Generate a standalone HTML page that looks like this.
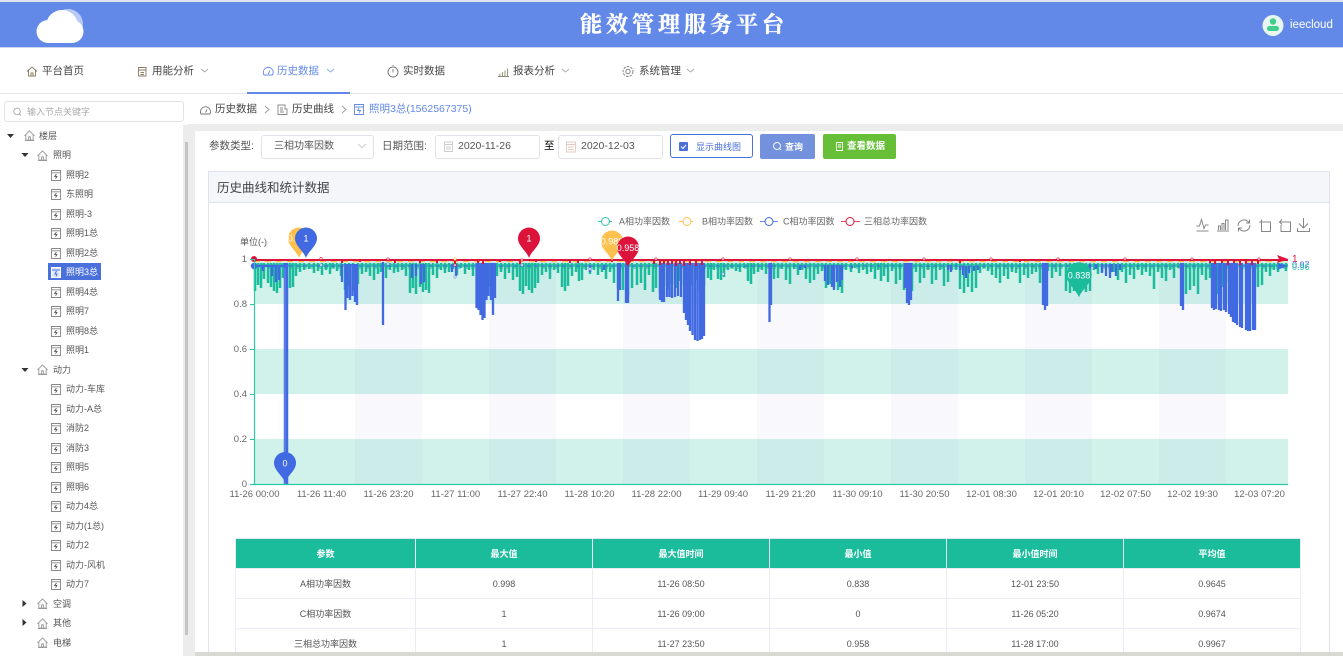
<!DOCTYPE html>
<html lang="zh"><head><meta charset="utf-8"><title>能效管理服务平台</title>
<style>
html,body{margin:0;padding:0;background:#fff}
#p{position:relative;width:1343px;height:656px;overflow:hidden;background:#fff;font-family:"Liberation Sans","Noto Sans CJK SC",sans-serif;color:#555}
#p div,#p span.t{position:absolute;white-space:nowrap}
.t{line-height:16px;height:16px}
.n{font-size:10.5px;color:#444;top:63px}
.b{font-size:10.5px;color:#444;top:101px}
.tr{font-size:9px;color:#555}
.box{border:1px solid #dfe2ea;border-radius:3px;background:#fff;box-sizing:border-box}
table{position:absolute;left:235px;top:538px;width:1065px;border-collapse:collapse;table-layout:fixed;font-size:9px;color:#555;text-align:center;border:1px solid #e3e6f1}
th{background:#1abc9c;color:#fff;height:29px;padding:0;font-weight:bold;border:1px solid #e9ecf5;border-top:0;border-bottom:0}
td{height:29px;padding:0;border:1px solid #e9ecf5}
svg{position:absolute;left:0;top:0}
svg text{font-family:"Liberation Sans","Noto Sans CJK SC",sans-serif}
</style></head><body><div id="p">

<div style="left:0;top:0;width:1343px;height:2px;background:#dfe3ee"></div>
<div style="left:0;top:2px;width:1343px;height:45px;background:#6389e8"></div>
<div style="left:0;top:47px;width:1343px;height:1px;background:#ccd6f0"></div>
<div style="left:580px;top:8px;font:bold 22px/32px 'Noto Serif CJK SC','Liberation Serif',serif;letter-spacing:4px;color:#fff;-webkit-text-stroke:.35px #fff">能效管理服务平台</div>
<div style="left:1290px;top:17px;font-size:11.5px;line-height:16px;color:#fff">ieecloud</div>

<div style="left:0;top:93px;width:1343px;height:1px;background:#e6e6e6"></div>
<div class="n t" style="left:42px">平台首页</div>
<div class="n t" style="left:152px">用能分析</div>
<div class="n t" style="left:277px;color:#6389e8">历史数据</div>
<div class="n t" style="left:403px">实时数据</div>
<div class="n t" style="left:513px">报表分析</div>
<div class="n t" style="left:639px">系统管理</div>
<div style="left:247px;top:92px;width:103px;height:2px;background:#6389e8"></div>

<div class="b t" style="left:215px">历史数据</div>
<div class="b t" style="left:292px">历史曲线</div>
<div class="b t" style="left:369px;color:#6389e8">照明3总(1562567375)</div>

<div style="left:183px;top:124px;width:1160px;height:532px;background:#ececec"></div>
<div style="left:183px;top:94px;width:5px;height:31px;background:#fff"></div>
<div class="box" style="left:4px;top:101px;width:180px;height:21px"></div>
<div class="t" style="left:27px;top:104px;font-size:9px;color:#aaa">输入节点关键字</div>
<div style="left:185px;top:142px;width:3px;height:493px;background:#c4c4c4"></div>
<div style="left:195px;top:131px;width:1148px;height:521px;background:#fff"></div>

<div class="tr t" style="left:39px;top:128px">楼层</div>
<div class="tr t" style="left:53px;top:147px">照明</div>
<div class="tr t" style="left:66px;top:167px">照明2</div>
<div class="tr t" style="left:66px;top:186px">东照明</div>
<div class="tr t" style="left:66px;top:206px">照明-3</div>
<div class="tr t" style="left:66px;top:225px">照明1总</div>
<div class="tr t" style="left:66px;top:245px">照明2总</div>
<div style="left:48px;top:263px;width:53px;height:17px;background:#4a70dc"></div>
<div class="tr t" style="left:66px;top:264px;color:#fff">照明3总</div>
<div class="tr t" style="left:66px;top:284px">照明4总</div>
<div class="tr t" style="left:66px;top:303px">照明7</div>
<div class="tr t" style="left:66px;top:323px">照明8总</div>
<div class="tr t" style="left:66px;top:342px">照明1</div>
<div class="tr t" style="left:53px;top:362px">动力</div>
<div class="tr t" style="left:66px;top:381px">动力-车库</div>
<div class="tr t" style="left:66px;top:401px">动力-A总</div>
<div class="tr t" style="left:66px;top:420px">消防2</div>
<div class="tr t" style="left:66px;top:440px">消防3</div>
<div class="tr t" style="left:66px;top:459px">照明5</div>
<div class="tr t" style="left:66px;top:479px">照明6</div>
<div class="tr t" style="left:66px;top:498px">动力4总</div>
<div class="tr t" style="left:66px;top:518px">动力(1总)</div>
<div class="tr t" style="left:66px;top:537px">动力2</div>
<div class="tr t" style="left:66px;top:557px">动力-风机</div>
<div class="tr t" style="left:66px;top:576px">动力7</div>
<div class="tr t" style="left:53px;top:596px">空调</div>
<div class="tr t" style="left:53px;top:615px">其他</div>
<div class="tr t" style="left:53px;top:635px">电梯</div>

<div class="t" style="left:209px;top:138px;font-size:10.5px;color:#555">参数类型:</div>
<div class="box" style="left:261px;top:135px;width:113px;height:24px"></div>
<div class="t" style="left:274px;top:139px;font-size:10px;color:#555">三相功率因数</div>
<div class="t" style="left:382px;top:138px;font-size:10.5px;color:#555">日期范围:</div>
<div class="box" style="left:435px;top:135px;width:105px;height:24px"></div>
<div class="t" style="left:458px;top:138px;font-size:10.5px;color:#555">2020-11-26</div>
<div class="t" style="left:544px;top:138px;font-size:10.5px;color:#000">至</div>
<div class="box" style="left:558px;top:135px;width:105px;height:24px"></div>
<div class="t" style="left:581px;top:138px;font-size:10.5px;color:#555">2020-12-03</div>
<div class="box" style="left:670px;top:134px;width:83px;height:24px;border-color:#4a70dc"></div>
<div class="t" style="left:696px;top:139px;font-size:9px;color:#4a70dc">显示曲线图</div>
<div style="left:760px;top:134px;width:55px;height:25px;background:#7391dd;border-radius:2px"></div>
<div class="t" style="left:785px;top:139px;font-size:9px;color:#fff;font-weight:bold">查询</div>
<div style="left:823px;top:134px;width:73px;height:25px;background:#66bf36;border-radius:2px"></div>
<div class="t" style="left:847px;top:139px;font-size:9.5px;color:#fff;font-weight:bold">查看数据</div>

<div style="left:208px;top:171px;width:1122px;height:490px;border:1px solid #e0e3ee;box-sizing:border-box;background:#fff"></div>
<div style="left:209px;top:172px;width:1120px;height:31px;background:#f5f6fa;border-bottom:1px solid #e0e3ee;box-sizing:border-box"></div>
<div class="t" style="left:217px;top:180px;font-size:12.5px;color:#444">历史曲线和统计数据</div>

<svg width="1343" height="656" viewBox="0 0 1343 656">
<defs>
<symbol id="h" viewBox="0 0 12 12" overflow="visible"><path d="M.5 6.5 6 1l5.500 5.500M2 5.500V11h8V5.500M5 11V7.500h2V11M1 11.500h10" fill="none" stroke="#999" stroke-width="1"/></symbol>
<symbol id="m" viewBox="0 0 11 12" overflow="visible"><path d="M.5.500h10v11H.500zM.5 3h10" fill="none" stroke="#888" stroke-width="1"/><path d="M6 4.500 4 7h2.500L5 9.500" fill="none" stroke="#555" stroke-width="1"/></symbol>
<path id="pin" d="M0 19.500C-2 13-11 7.500-11 0A11 11 0 1 1 11 0C11 7.500 2 13 0 19.500Z"/>
</defs>

<g fill="#fff">
<circle cx="68" cy="24" r="15" opacity=".55"/><circle cx="62" cy="26" r="16"/><circle cx="48" cy="31.500" r="11.500"/><circle cx="72" cy="31.500" r="11.500"/><rect x="48" y="30" width="24" height="13"/>
</g>
<circle cx="1273" cy="25.500" r="10.500" fill="#e8f6ef"/><circle cx="1273" cy="21.500" r="3.200" fill="#3ecf8e"/><rect x="1267" y="26" width="12" height="5" rx="2.500" fill="#3ecf8e"/>

<g fill="none" stroke="#777" stroke-width=".9">
<path d="M27 71.500 32 67l5 4.500M28.500 70.500V76h7v-5.500M31 76v-3h2v3" stroke="#8a7a60"/>
<path d="M138.500 67.500h7.500v8.500h-7.500zM138 70h8.500M140.500 72.500h3.500M140.500 74.500h3.500" stroke="#8a7a60"/>
<path d="M264 75a5 5 0 1 1 8.500 0zM268.200 74l1.800-3.500" stroke="#6389e8"/>
<circle cx="393" cy="72" r="5"/><path d="M393 66v-1M393 69v3.500"/>
<path d="M498 76.500h11M500 76v-2.500M502.500 76v-4M505 76v-5.500M507.500 76v-7.500" stroke="#8a8a70"/>
<circle cx="628" cy="71.500" r="2.200"/><circle cx="628" cy="71.500" r="5" stroke-dasharray="2.500 1.200"/>
<path d="m201 69 3.500 3 3.500-3M562 69l3.500 3 3.500-3M687 69l3.500 3 3.500-3" stroke="#aaa"/>
<path d="m327 69 3.500 3 3.500-3" stroke="#8ea8ee"/>
<circle cx="17" cy="111.500" r="3.300" stroke="#aaa"/><path d="m19.500 114 1.500 1.500" stroke="#aaa"/>
<path d="M201 114a5 5 0 1 1 9 0zM205.500 112.500l1.500-3"/>
<path d="M278 105h7v4h2v5.500h-9z" stroke="#888"/><path d="M280 108h3M280 110h3M280 112h4" stroke="#888"/>
<path d="m265 106 4 3.500-4 3.500M342 106l4 3.500-4 3.500" stroke="#999"/>
<path d="M354.500 104.500h9v10h-9zM354.500 107h9M359 108l-1.500 2.500h3L359 113" stroke="#6389e8"/>
<path d="m358 144 4 3.500 4-3.500" stroke="#c8c8c8"/>
<path d="M444.500 142h8v9.500h-8zM444.500 144.500h8M446 147h5M446 149h5" stroke="#ccc"/>
<path d="M566.500 142h9v10h-9zM566.500 144.500h9M568 147h6M568 149.500h6" stroke="#e3c9c0"/>
<path d="M836.500 142.500h6v8h-6zM838 145h3M838 147h3" stroke="#fff"/>
<circle cx="777" cy="146" r="3.500" stroke="#fff"/><path d="m779.500 148.500 1.500 1.500" stroke="#fff"/>
</g>
<rect x="679" y="142" width="9" height="9" rx="1" fill="#4a70dc"/><path d="m681 146.500 2 2 3-3.500" fill="none" stroke="#fff" stroke-width="1"/>

<g id="tree">
<path d="M7 134h7l-3.500 4zM21.500 153h7l-3.500 4zM21.500 368h7l-3.500 4z" fill="#333"/><path d="M22.500 600v7l4-3.500zM22.500 619v7l4-3.500z" fill="#333"/>
<use href="#h" x="24" y="130" width="11" height="11"/><use href="#h" x="37" y="150" width="11" height="11"/><use href="#h" x="37" y="364" width="11" height="11"/><use href="#h" x="37" y="598" width="11" height="11"/><use href="#h" x="37" y="618" width="11" height="11"/><use href="#h" x="37" y="637" width="11" height="11"/>
<use href="#m" x="51" y="170" width="10" height="11"/><use href="#m" x="51" y="189" width="10" height="11"/><use href="#m" x="51" y="209" width="10" height="11"/><use href="#m" x="51" y="228" width="10" height="11"/><use href="#m" x="51" y="248" width="10" height="11"/>
<rect x="51.500" y="267.500" width="9" height="10" fill="#dfe7fb" stroke="#fff"/><path d="M52 270h8M56.500 271 55 274h2l-1 2.500" fill="none" stroke="#4a70dc"/>
<use href="#m" x="51" y="287" width="10" height="11"/><use href="#m" x="51" y="306" width="10" height="11"/><use href="#m" x="51" y="326" width="10" height="11"/><use href="#m" x="51" y="345" width="10" height="11"/>
<use href="#m" x="51" y="384" width="10" height="11"/><use href="#m" x="51" y="404" width="10" height="11"/><use href="#m" x="51" y="423" width="10" height="11"/><use href="#m" x="51" y="443" width="10" height="11"/><use href="#m" x="51" y="462" width="10" height="11"/><use href="#m" x="51" y="482" width="10" height="11"/><use href="#m" x="51" y="501" width="10" height="11"/><use href="#m" x="51" y="521" width="10" height="11"/><use href="#m" x="51" y="540" width="10" height="11"/><use href="#m" x="51" y="560" width="10" height="11"/><use href="#m" x="51" y="579" width="10" height="11"/>
</g>

<g fill="#f8f8fd">
<rect x="355" y="259" width="67" height="225"/><rect x="489" y="259" width="67" height="225"/><rect x="623" y="259" width="67" height="225"/><rect x="757" y="259" width="67" height="225"/><rect x="891" y="259" width="67" height="225"/><rect x="1025" y="259" width="67" height="225"/><rect x="1159" y="259" width="67" height="225"/>
</g>
<g fill="#1abc9c" fill-opacity=".2">
<rect x="254" y="259" width="1034" height="45"/><rect x="254" y="349" width="1034" height="45"/><rect x="254" y="439" width="1034" height="45"/>
</g>

<path fill="none" stroke="#1abc9c" stroke-width="2.500" d="M255 263V291M258 263V285M261 263V288M264 263V279M268 263V283M271 263V287M274 263V291M277 263V293M280 263V288M283 263V278M290 263V288M293 263V287M296 263V276M300 263V272M304 263V270M309 263V269M314 263V273M318 263V271M322 263V275M326 263V270M330 263V274M333 263V268M337 263V271M341 263V276M345 263V290M349 263V286M353 263V291M358 263V284M362 263V274M366 263V272M370 263V276M374 263V280M378 263V274M381 263V272M386 263V278M390 263V270M394 263V273M398 263V272M402 263V270M406 263V276M410 263V293M413 263V288M416 263V294M420 263V287M423 263V292M426 263V290M429 263V293M433 263V275M437 263V278M441 263V270M445 263V273M449 263V272M453 263V269M457 263V275M461 263V268M465 263V274M469 263V270M473 263V276M477 263V293M481 263V288M485 263V291M489 263V287M493 263V290M497 263V276M501 263V272M505 263V279M509 263V273M513 263V280M517 263V277M520 263V291M523 263V294M526 263V286M529 263V290M532 263V293M535 263V288M538 263V283M542 263V275M546 263V272M550 263V279M554 263V270M558 263V273M562 263V287M565 263V291M568 263V286M572 263V276M576 263V272M579 263V281M582 263V280M586 263V270M590 263V274M594 263V270M598 263V275M602 263V272M606 263V279M610 263V272M614 263V283M618 263V288M623 263V290M628 263V295M632 263V288M637 263V285M641 263V283M645 263V290M649 263V275M653 263V292M656 263V288M660 263V293M664 263V286M668 263V289M672 263V284M676 263V288M680 263V281M684 263V285M688 263V280M692 263V285M696 263V280M700 263V290M704 263V286M708 263V278M711 263V280M714 263V270M718 263V279M721 263V280M724 263V277M728 263V270M732 263V268M736 263V271M740 263V272M744 263V268M748 263V281M751 263V284M754 263V274M758 263V272M762 263V270M766 263V274M770 263V283M774 263V279M778 263V278M782 263V269M786 263V280M790 263V284M794 263V269M798 263V275M802 263V270M806 263V279M810 263V283M814 263V280M818 263V274M822 263V271M826 263V288M830 263V284M834 263V287M838 263V290M842 263V293M846 263V270M851 263V272M855 263V268M859 263V273M863 263V270M867 263V274M871 263V272M875 263V279M878 263V270M881 263V281M884 263V276M888 263V282M892 263V271M896 263V284M900 263V280M904 263V290M908 263V282M912 263V291M916 263V272M920 263V283M924 263V278M928 263V270M932 263V284M936 263V280M940 263V270M944 263V286M948 263V282M952 263V270M956 263V270M960 263V289M964 263V293M968 263V287M972 263V292M976 263V288M980 263V273M984 263V268M988 263V271M992 263V275M996 263V278M1000 263V283M1004 263V276M1008 263V279M1012 263V272M1016 263V273M1020 263V283M1024 263V275M1028 263V278M1032 263V274M1036 263V272M1040 263V283M1044 263V278M1048 263V271M1052 263V278M1056 263V272M1060 263V276M1066 263V291M1070 263V293M1074 263V291M1078 263V290M1082 263V289M1086 263V292M1090 263V291M1094 263V270M1098 263V274M1102 263V272M1106 263V268M1110 263V273M1114 263V272M1118 263V280M1122 263V272M1126 263V283M1130 263V275M1134 263V279M1138 263V270M1142 263V275M1146 263V272M1150 263V276M1154 263V289M1158 263V272M1162 263V278M1166 263V281M1170 263V270M1174 263V278M1178 263V268M1186 263V294M1190 263V290M1194 263V286M1198 263V294M1202 263V275M1206 263V280M1210 263V278M1214 263V290M1218 263V294M1222 263V287M1226 263V282M1258 263V287M1262 263V285M1266 263V272M1270 263V276M1274 263V270M1278 263V272M1282 263V268M1286 263V271"/>
<path d="M254 265.500H1288" fill="none" stroke="#1abc9c" stroke-width="3" opacity=".75"/>
<path d="M254 268H1288" fill="none" stroke="#1abc9c" stroke-width="1" stroke-dasharray="4 3"/>

<path fill="none" stroke="#4169e1" stroke-width="2.300" d="M254 266H284M263 265V271M272 265V276M276 265V282M279 265V280M342 264V282M345.500 264V310M347.500 264V298M350 264V300M352.500 264V296M355 264V302M357 264V305M383 262V325M412 264V278M416 264V276M421 264V284M424 264V282M452 264V272M456 264V276M476.500 263V308M478.500 263V310M480.500 263V315M482.500 263V320M484.500 263V318M486.500 263V300M488.500 263V296M491 263V300M493 263V315M495 263V298M590 265V272M604 265V270M618 263V301M620 263V290M626 263V303M628 263V303M660 263V300M662 263V302M664 263V302M667 263V297M669.500 263V297M672 263V298M675 263V297M678 263V296M681 263V297M684 263V313M686 263V320M688 263V325M690 263V331M692.500 263V335M695 263V340M697.500 263V341M700 263V340M702 263V339M704 263V336M769.500 263V322M771 263V305M800 265V270M805 265V268M825 265V281M828 265V285M832 265V287M834 265V290M837 265V282M840 265V287M842 265V280M852 266V268M905 263V288M907 263V303M909 263V305M911 263V300M948 265V270M951 265V272M960 266V270M963 266V275M966 266V278M969 266V273M974 266V271M978 266V270M1043 263V305M1045 263V310M1047 263V306M1084 264V268M1090 264V270M1096 264V269M1102 264V273M1106 264V276M1110 264V278M1112 264V272M1116 264V276M1120 264V270M1181 263V306M1183 263V310M1212 263V308M1214 263V310M1216 263V309M1219 263V310M1221 263V311M1224 263V310M1226 263V312M1229 263V314M1231 263V317M1233 263V322M1235 263V323M1237 263V325M1240 263V327M1242 263V328M1246 263V330M1248 263V331M1250 263V331M1253 263V330M1255 263V330"/>
<path d="M286 263V484" fill="none" stroke="#4169e1" stroke-width="4.500"/>
<path d="M285 268V484" fill="none" stroke="#6f8dea" stroke-width="1"/>
<path d="M254 266H1288" fill="none" stroke="#4169e1" stroke-width="1" stroke-dasharray="4 3"/>
<path d="M254 261.500H1288" fill="none" stroke="#ffc14d" stroke-width="1.200" stroke-dasharray="6 5"/>
<path fill="none" stroke="#dc143c" stroke-width="2" d="M254 260H1288M342 260V263M360 260V262M395 260V263M420 260V263M437 260V263M455 260V264M478 260V263M483 260V264M500 260V262M520 260V264M536 260V262M570 260V263M578 260V263M612 260V262M654 260V264M660 260V265M664 260V264M668 260V265M672 260V264M676 260V266M680 260V264M684 260V266M690 260V265M696 260V266M702 260V265M960 260V263M1020 260V262M1210 260V263M1215 260V264M1222 260V263M1228 260V265M1234 260V263M1240 260V265M1246 260V264M1252 260V265M1258 260V264"/>
<g fill="#fff" stroke-width=".6">
<g stroke="#dc143c"><circle cx="321" cy="258.500" r="1.200"/><circle cx="388" cy="259" r="1.200"/><circle cx="522" cy="260" r="1.200"/><circle cx="590" cy="259" r="1.200"/><circle cx="656" cy="259" r="1.200"/><circle cx="723" cy="259" r="1.200"/><circle cx="790" cy="259" r="1.200"/><circle cx="857" cy="259" r="1.200"/><circle cx="924" cy="259" r="1.200"/><circle cx="991" cy="259" r="1.200"/><circle cx="1058" cy="259" r="1.200"/><circle cx="1125" cy="259" r="1.200"/><circle cx="1192" cy="259" r="1.200"/><circle cx="1259" cy="259" r="1.200"/><circle cx="455" cy="265" r="1.200"/></g>
<g stroke="#6f8dea"><circle cx="321" cy="265" r="1.200"/><circle cx="388" cy="264" r="1.200"/><circle cx="455" cy="277" r="1.200"/><circle cx="522" cy="265" r="1.200"/><circle cx="590" cy="269" r="1.200"/><circle cx="723" cy="274" r="1.200"/></g>
<circle cx="455" cy="259" r="1.200" stroke="#ffc14d"/>
</g>
<circle cx="254" cy="259" r="3" fill="#dc143c"/><circle cx="254" cy="266" r="3.200" fill="#4169e1"/>
<path d="M1277 255 1288 259 1277 263 1279 259Z" fill="#dc143c"/><path d="M1277 262.500 1288 266 1277 270 1279 266Z" fill="#4169e1"/>

<path d="M254.500 259V484.500M250 484.500H1288" fill="none" stroke="#2dc9a5" stroke-width="1.200"/>
<path d="M250 259.500h4M250 304.500h4M250 349.500h4M250 394.500h4M250 439.500h4" stroke="#2dc9a5" stroke-width="1"/>

<g font-size="9.500" fill="#666" text-anchor="end">
<text x="247" y="262">1</text><text x="247" y="307">0.8</text><text x="247" y="352">0.6</text><text x="247" y="397">0.4</text><text x="247" y="442">0.2</text><text x="247" y="487">0</text>
</g>
<text x="240" y="245" font-size="9" fill="#555">单位(-)</text>
<g font-size="9.500" fill="#666" text-anchor="middle">
<text x="254.500" y="497">11-26 00:00</text><text x="321.500" y="497">11-26 11:40</text><text x="388.500" y="497">11-26 23:20</text><text x="455.500" y="497">11-27 11:00</text><text x="522.500" y="497">11-27 22:40</text><text x="589.500" y="497">11-28 10:20</text><text x="656.500" y="497">11-28 22:00</text><text x="723" y="497">11-29 09:40</text><text x="790.500" y="497">11-29 21:20</text><text x="857.500" y="497">11-30 09:10</text><text x="924.500" y="497">11-30 20:50</text><text x="991.500" y="497">12-01 08:30</text><text x="1058.500" y="497">12-01 20:10</text><text x="1125.500" y="497">12-02 07:50</text><text x="1192.500" y="497">12-02 19:30</text><text x="1259.500" y="497">12-03 07:20</text>
</g>
<text x="1292" y="262" font-size="10" fill="#dc143c">1</text>
<text x="1292" y="268" font-size="9" fill="#4169e1">0.97</text>
<text x="1292" y="270" font-size="9" fill="#2cc4a4">0.96</text>

<use href="#pin" transform="translate(299 238.500)" fill="#ffc14d"/><text x="299" y="241.500" font-size="9" fill="#fff" text-anchor="middle">0.998</text>
<use href="#pin" transform="translate(306 238.500)" fill="#4169e1"/><text x="306" y="241.500" font-size="9" fill="#fff" text-anchor="middle">1</text>
<use href="#pin" transform="translate(529 238.500)" fill="#dc143c"/><text x="529" y="241.500" font-size="9" fill="#fff" text-anchor="middle">1</text>
<use href="#pin" transform="translate(612 241.500)" fill="#ffc14d"/><text x="612" y="244.500" font-size="9" fill="#fff" text-anchor="middle">0.988</text>
<use href="#pin" transform="translate(628 247.500)" fill="#dc143c"/><text x="628" y="251" font-size="9" fill="#fff" text-anchor="middle">0.958</text>
<use href="#pin" transform="translate(285 463)" fill="#4169e1"/><text x="285" y="466.500" font-size="9" fill="#fff" text-anchor="middle">0</text>
<use href="#pin" transform="translate(1079 275) scale(1.150)" fill="#1abc9c"/><text x="1079" y="278.500" font-size="9" fill="#fff" text-anchor="middle">0.838</text>

<g fill="none" stroke-width="1">
<path d="M598 221.500h14" stroke="#2cc9a8"/><circle cx="605.500" cy="221.500" r="4" fill="#fff" stroke="#2cc9a8"/>
<path d="M679 221.500h14" stroke="#ffc14d"/><circle cx="687" cy="221.500" r="4" fill="#fff" stroke="#ffc14d"/>
<path d="M760 221.500h18" stroke="#4169e1" opacity=".8"/><circle cx="769" cy="221.500" r="4" fill="#fff" stroke="#4169e1"/>
<path d="M841 221.500h19" stroke="#dc143c" opacity=".8"/><circle cx="850" cy="221.500" r="4" fill="#fff" stroke="#dc143c"/>
</g>
<g font-size="9" fill="#666">
<text x="619" y="224.500">A相功率因数</text><text x="702" y="224.500">B相功率因数</text><text x="783" y="224.500">C相功率因数</text><text x="864" y="224.500">三相总功率因数</text>
</g>

<g fill="none" stroke="#888" stroke-width="1">
<path d="M1196.500 231h12M1196.500 226h3l2-6.500 2.500 9 1.500-3.500h3"/>
<path d="M1217 231h12M1218.500 230v-4h2v4M1222 230v-6.500h2v6.500M1225.500 230v-10h2.500v10"/>
<path d="M1238 226a6 6 0 0 1 10-4.500l1.500 1.500M1250 225a6 6 0 0 1-10 4.500l-1.500-1.500M1249.500 219.500v3.500h-3.500M1238.500 231.500V228h3.500"/>
<path d="M1259 222h11.500v9.500h-9V219.500"/>
<path d="M1282 219.500l-2.500 2.500 2.500 2.500M1280 222h10.500v9.500h-9.500V225"/>
<path d="M1303.500 218v10M1299 223.500l4.500 4.500 4.500-4.500M1297.500 228v3.500h12V228"/>
</g>
</svg>

<table>
<colgroup><col style="width:180px"><col style="width:177px"><col style="width:177px"><col style="width:177px"><col style="width:177px"><col style="width:177px"></colgroup>
<tr><th>参数</th><th>最大值</th><th>最大值时间</th><th>最小值</th><th>最小值时间</th><th>平均值</th></tr>
<tr><td>A相功率因数</td><td>0.998</td><td>11-26 08:50</td><td>0.838</td><td>12-01 23:50</td><td>0.9645</td></tr>
<tr><td>C相功率因数</td><td>1</td><td>11-26 09:00</td><td>0</td><td>11-26 05:20</td><td>0.9674</td></tr>
<tr><td>三相总功率因数</td><td>1</td><td>11-27 23:50</td><td>0.958</td><td>11-28 17:00</td><td>0.9967</td></tr>
</table>
<div style="left:195px;top:652px;width:1148px;height:4px;background:#d9d9d3"></div>
</div></body></html>
